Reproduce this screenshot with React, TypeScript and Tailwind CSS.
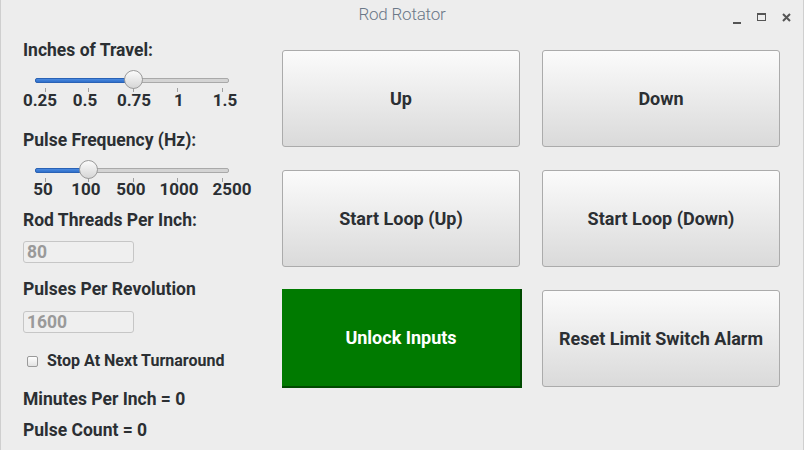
import React from "react";

const font = { fontFamily: "Roboto, 'Liberation Sans', sans-serif" };

function Slider({ fill, ticks }: { fill: number; ticks: number[] }) {
  return (
    <div className="relative ml-[12px] h-[20px] w-[194px]">
      <div className="absolute left-0 right-0 top-[8px] h-[5px] rounded-[2px] border border-[#a9a9a9] bg-[#d4d4d4]" />
      <div
        className="absolute left-0 top-[8px] h-[5px] rounded-l-[2px] border border-[#2a62b5] bg-gradient-to-b from-[#4a8ae0] to-[#2f6fca]"
        style={{ width: fill }}
      />
      {ticks.map((t) => (
        <div key={t} className="absolute top-[18px] h-[4px] w-px bg-[#a0a0a0]" style={{ left: t }} />
      ))}
      <div
        className="absolute top-[0px] h-[19px] w-[19px] rounded-full border border-[#9a9a9a] bg-gradient-to-b from-[#fbfbfb] to-[#d6d6d6]"
        style={{ left: fill - 9.5 }}
      />
    </div>
  );
}

function Scale({ items }: { items: [string, number][] }) {
  return (
    <div className="relative h-[20px] w-[240px]">
      {items.map(([t, c]) => (
        <span
          key={t}
          className="absolute top-0 -translate-x-1/2 whitespace-nowrap text-[17px] font-bold leading-[20px] text-[#2b2f33]"
          style={{ left: c }}
        >
          {t}
        </span>
      ))}
    </div>
  );
}

function Btn({ children }: { children: React.ReactNode }) {
  return (
    <button className="flex h-[97px] w-[238px] items-center justify-center rounded-[3px] border border-[#ababab] bg-gradient-to-b from-[#fbfbfb] to-[#dadada] text-[18px] font-bold text-[#2b2f33]">
      {children}
    </button>
  );
}

export default function App() {
  return (
    <div
      className="relative flex h-[450px] w-[804px] flex-col overflow-hidden border-l border-r border-[#cfcfcf] bg-[#ededed]"
      style={font}
    >
      {/* title bar */}
      <div className="relative flex h-[30px] items-center justify-center">
        <span className="text-[17px] font-light tracking-[-0.2px] text-[#6b7888]">Rod Rotator</span>
        <div className="absolute right-[12px] top-[10px] flex items-center gap-[16px]">
          <div className="mt-[12px] h-[2px] w-[8px] bg-[#555]" />
          <div className="h-[8px] w-[9px] border border-t-2 border-[#555]" />
          <svg width="9" height="9" viewBox="0 0 9 9">
            <path d="M1 1 L8 8 M8 1 L1 8" stroke="#555" strokeWidth="2" />
          </svg>
        </div>
      </div>

      <div className="flex items-start">
        {/* left panel */}
        <div className="flex w-[281px] flex-col pl-[22px] text-[17.5px] font-bold leading-[20px] text-[#2b2f33]">
          <div className="mt-[10px] h-[20px]">Inches of Travel:</div>
          <div className="mt-[10px]">
            <Slider fill={98} ticks={[10, 53, 98, 142, 187]} />
          </div>
          <Scale
            items={[
              ["0.25", 17],
              ["0.5", 62],
              ["0.75", 111],
              ["1", 156],
              ["1.5", 202],
            ]}
          />
          <div className="mt-[20px] h-[20px]">Pulse Frequency (Hz):</div>
          <div className="mt-[10px]">
            <Slider fill={53} ticks={[10, 53, 98, 142, 187]} />
          </div>
          <div className="-mt-[1px]">
            <Scale
              items={[
                ["50", 20],
                ["100", 63],
                ["500", 108],
                ["1000", 156],
                ["2500", 209],
              ]}
            />
          </div>
          <div className="mt-[11px] h-[20px]">Rod Threads Per Inch:</div>
          <div className="mt-[11px] flex h-[22px] w-[111px] items-center rounded-[3px] border border-[#c6c6c6] bg-[#efefef] pl-[3px] text-[#9a9a9a]">
            80
          </div>
          <div className="mt-[16px] h-[20px]">Pulses Per Revolution</div>
          <div className="mt-[12px] flex h-[22px] w-[111px] items-center rounded-[3px] border border-[#c6c6c6] bg-[#efefef] pl-[3px] text-[#9a9a9a]">
            1600
          </div>
          <div className="mt-[18px] flex h-[20px] items-center">
            <div className="ml-[4px] h-[11px] w-[11px] rounded-[2px] border border-[#9a9a9a] bg-gradient-to-b from-[#fefefe] to-[#e2e2e2]" />
            <span className="ml-[9px] text-[16px]">Stop At Next Turnaround</span>
          </div>
          <div className="mt-[18px] h-[20px]">Minutes Per Inch = 0</div>
          <div className="mt-[11px] h-[20px]">Pulse Count = 0</div>
        </div>

        {/* buttons */}
        <div className="mt-[20px] grid grid-cols-[238px_238px] content-start gap-x-[22px] gap-y-[23px]">
          <Btn>Up</Btn>
          <Btn>Down</Btn>
          <Btn>Start Loop (Up)</Btn>
          <Btn>Start Loop (Down)</Btn>
          <button className="-mt-[1px] flex h-[99px] w-[240px] items-center justify-center border-b-2 border-r-2 border-[#004a00] bg-[#007a00] text-[18px] font-bold text-white">
            Unlock Inputs
          </button>
          <Btn>Reset Limit Switch Alarm</Btn>
        </div>
      </div>
    </div>
  );
}
